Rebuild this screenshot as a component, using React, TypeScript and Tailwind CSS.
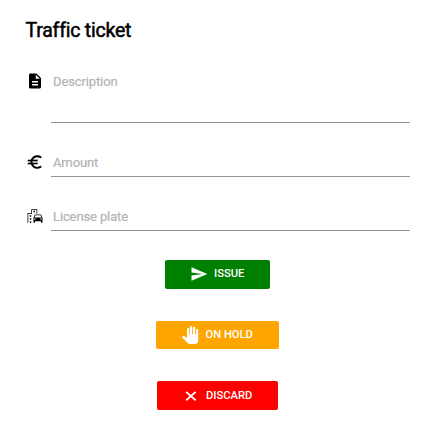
import type { ReactNode } from "react";
import { MdDescription, MdEmojiTransportation, MdPanTool, MdSend } from "react-icons/md";

function EuroIcon() {
  return (
    <svg viewBox="0 0 24 24" width="18" height="18" fill="currentColor" stroke="currentColor" strokeWidth="0.2">
      <path d="M15 18.5c-2.51 0-4.68-1.42-5.76-3.5H15l1-2H8.58c-.05-.33-.08-.66-.08-1s.03-.67.08-1H15l1-2H9.24C10.32 6.92 12.5 5.5 15 5.5c1.61 0 3.09.59 4.23 1.57L21 5.3C19.41 3.87 17.3 3 15 3c-3.92 0-7.24 2.51-8.48 6H3l-1 2h4.06c-.04.33-.06.66-.06 1s.02.67.06 1H3l-1 2h4.52c1.24 3.49 4.56 6 8.48 6 2.31 0 4.41-.87 6-2.3l-1.78-1.77c-1.13.98-2.6 1.57-4.22 1.57z" />
    </svg>
  );
}

function CrossIcon() {
  return (
    <svg viewBox="0 0 18 18" width="18" height="18" fill="none" stroke="currentColor" strokeWidth="1.9">
      <path d="M4.1 4.9 13.7 13.4M13.7 4.9 4.1 13.4" />
    </svg>
  );
}

function Field({ icon, label, className }: { icon: ReactNode; label: string; className: string }) {
  return (
    <div className="flex pl-[26px] pr-[19px]">
      <div className="w-[25px] shrink-0 text-[18px] text-black">{icon}</div>
      <div className={`flex-1 border-b border-[#949494] pl-0.5 pt-px text-[13px] leading-[18px] tracking-[-0.12px] text-[#b3b3b3] [-webkit-text-stroke:0.2px_#b3b3b3] ${className}`}>
        {label}
      </div>
    </div>
  );
}

function Action({ icon, label, className }: { icon: ReactNode; label: string; className: string }) {
  return (
    <button className={`flex items-center rounded-[2px] text-[11.2px] font-medium leading-none text-white ${className}`}>
      {icon}
      <span>{label}</span>
    </button>
  );
}

export default function App() {
  return (
    <main className="flex h-[435px] w-[429px] flex-col bg-white font-['Roboto',sans-serif]">
      <h1 className="pl-[25.5px] pt-[19px] text-[19.5px] font-normal leading-6 tracking-[-0.22px] text-black [-webkit-text-stroke:0.5px_black]">Traffic ticket</h1>
      <div className="mt-[29px] flex flex-col gap-[30px]">
        <Field icon={<MdDescription />} label="Description" className="h-[51px]" />
        <Field icon={<EuroIcon />} label="Amount" className="h-[24px]" />
        <Field icon={<MdEmojiTransportation />} label="License plate" className="h-[24px]" />
      </div>
      <div className="mt-[29px] flex flex-col">
        <Action icon={<MdSend size={18} />} label="ISSUE" className="ml-[165px] h-[29px] w-[105px] gap-[6px] bg-[#008000] pb-[2px] pl-[25px]" />
        <Action icon={<MdPanTool size={18} />} label="ON HOLD" className="ml-[156px] mt-8 h-[28px] w-[123px] gap-[6.5px] bg-[#ffa500] pb-px pl-[25px]" />
        <Action icon={<CrossIcon />} label="DISCARD" className="ml-[157px] mt-8 h-[29px] w-[121px] gap-[6px] bg-[#ff0000] pl-[25px]" />
      </div>
    </main>
  );
}
